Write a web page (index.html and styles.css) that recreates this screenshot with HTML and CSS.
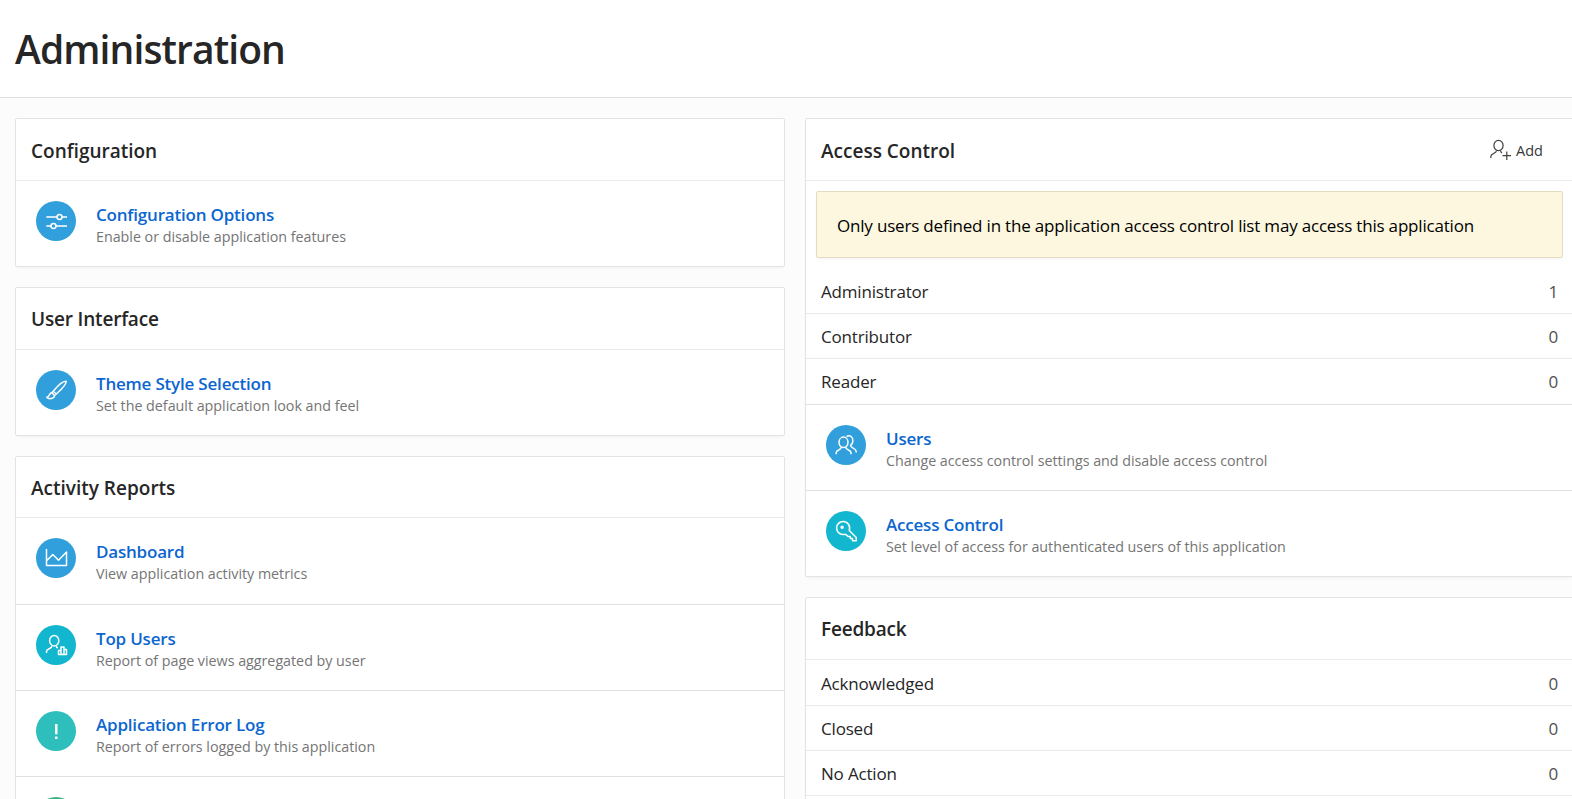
FILE: index.html
```html
<!DOCTYPE html>
<html lang="en">
<head>
<meta charset="utf-8">
<title>Administration</title>
<link rel="stylesheet" href="styles.css">
</head>
<body>
<header class="page-header"><h1 class="page-title">Administration</h1></header>
<main class="columns">
  <div class="column">
    <section class="card">
      <div class="card-head"><h2>Configuration</h2></div>
      <div class="item">
        <span class="badge blue"><svg class="icon" viewBox="0 0 24 24"><path d="M2.3 8h10.9M17.8 8H23M2.3 17h4.9M11.8 17H23"/><circle cx="15.5" cy="8" r="2.5"/><circle cx="9.5" cy="17" r="2.5"/></svg></span>
        <div class="item-text"><a class="item-title">Configuration Options</a><p class="item-desc">Enable or disable application features</p></div>
      </div>
    </section>
    <section class="card">
      <div class="card-head"><h2 class="raised">User Interface</h2></div>
      <div class="item">
        <span class="badge blue"><svg class="icon" viewBox="0 0 24 24"><path d="M22.2 3.2C22.6 5.500 18 11 12.300 16L9.200 13.200C13 8.500 19 3 22.200 3.200ZM9.200 13.200L7.800 14.800L10.600 17.500L12.300 16M7.800 14.800C5 14.800 5.800 18.500 2.800 19.200C4.500 21.600 10.200 21 10.600 17.500"/></svg></span>
        <div class="item-text"><a class="item-title">Theme Style Selection</a><p class="item-desc">Set the default application look and feel</p></div>
      </div>
    </section>
    <section class="card reports">
      <div class="card-head"><h2>Activity Reports</h2></div>
      <div class="item">
        <span class="badge blue"><svg class="icon" viewBox="0 0 24 24"><path d="M2.500 3V19.500H22.500V6L14.500 14.300L8.800 8.500L2.800 14.500"/></svg></span>
        <div class="item-text"><a class="item-title">Dashboard</a><p class="item-desc">View application activity metrics</p></div>
      </div>
      <div class="item">
        <span class="badge cyan"><svg class="icon" viewBox="0 0 24 24"><ellipse cx="10.200" cy="7.700" rx="4.600" ry="5.200"/><path d="M2.500 20V18.500C2.500 15.500 8 16 8 12.700M12.300 12.700C12.300 14.200 12.800 14.700 13.800 15.200M14.500 21.500V17.500H17V14H20V16.500H22.500V21.500ZM17 17.500V21.500M20 16.500V21.500"/></svg></span>
        <div class="item-text"><a class="item-title">Top Users</a><p class="item-desc">Report of page views aggregated by user</p></div>
      </div>
      <div class="item">
        <span class="badge teal"><svg class="icon" viewBox="0 0 24 24"><path class="bold" d="M12.300 5V15.300M12.300 17.600V19.900"/></svg></span>
        <div class="item-text"><a class="item-title">Application Error Log</a><p class="item-desc">Report of errors logged by this application</p></div>
      </div>
      <div class="item"><span class="badge green"></span></div>
    </section>
  </div>
  <div class="column side">
    <section class="card">
      <div class="card-head"><h2>Access Control</h2>
        <button class="add"><svg class="icon dark" viewBox="0 0 24 24"><ellipse cx="10.500" cy="7.500" rx="4.600" ry="5.200"/><path d="M2.800 20V18.500C2.800 15 8.500 16 8.500 12.500M12.500 12.500C12.500 14 13 14.400 14 14.900M18.800 13.500V22M14.500 17.700H23"/></svg><span class="add-label">Add</span></button>
      </div>
      <div class="alert">Only users defined in the application access control list may access this application</div>
      <dl class="rows">
        <div class="row"><dt>Administrator</dt><dd>1</dd></div>
        <div class="row"><dt>Contributor</dt><dd>0</dd></div>
        <div class="row last"><dt>Reader</dt><dd>0</dd></div>
      </dl>
      <div class="item">
        <span class="badge blue"><svg class="icon" viewBox="0 0 24 24"><ellipse cx="9.500" cy="9.300" rx="4.500" ry="5.200"/><path d="M2.200 21.200V19.800C2.200 16.500 7.300 17.500 7.300 14M11.700 14C11.700 17.500 17 16.500 17 19.800V21.200M12.500 3.500C16 1.500 19.200 4 18.900 8C18.800 10 17.800 11.500 16.500 12.300C16.500 15.300 22.200 15 22.200 18.500V19.500"/></svg></span>
        <div class="item-text"><a class="item-title">Users</a><p class="item-desc">Change access control settings and disable access control</p></div>
      </div>
      <div class="item">
        <span class="badge cyan"><svg class="icon" viewBox="0 0 24 24"><path d="M15.300 11.500L22.200 18.500V21.800H18.500V19.600H16.300V17.400H14L11.500 15.200C7 16.500 2.600 13.500 2.600 9C2.600 5.300 5.500 2.500 9.100 2.500C13.500 2.500 16.800 6.800 15.300 11.500Z"/><circle cx="8.100" cy="8.200" r="1"/></svg></span>
        <div class="item-text"><a class="item-title">Access Control</a><p class="item-desc">Set level of access for authenticated users of this application</p></div>
      </div>
    </section>
    <section class="card grow">
      <div class="card-head"><h2 class="raised">Feedback</h2></div>
      <dl class="rows feedback">
        <div class="row"><dt>Acknowledged</dt><dd>0</dd></div>
        <div class="row"><dt>Closed</dt><dd>0</dd></div>
        <div class="row"><dt>No Action</dt><dd>0</dd></div>
      </dl>
    </section>
  </div>
</main>
</body>
</html>
```
FILE: styles.css
```css
* { box-sizing: border-box; margin: 0; padding: 0; }
body {
  height: 799px;
  overflow: hidden;
  background: #fcfcfc;
  color: #262626;
  font-family: "Open Sans", "Noto Sans", sans-serif;
}
.page-header {
  height: 98px;
  padding: 22px 15px 0;
  background: #fff;
  border-bottom: 1px solid #e0e0e0;
}
.page-title { font-size: 39px; line-height: 54px; font-weight: 600; letter-spacing: -.9px; }
.columns {
  display: grid;
  grid-template-columns: 770px 770px;
  column-gap: 20px;
  height: 701px;
  padding: 20px 0 0 15px;
  overflow: hidden;
}
.column { display: flex; flex-direction: column; gap: 20px; }
.card {
  background: #fff;
  border: 1px solid #e3e3e3;
  border-radius: 2px;
  box-shadow: 0 2px 4px -2px rgba(0, 0, 0, .08);
}
.card.grow { flex: 1; border-bottom: 0; }
.card-head {
  display: flex;
  justify-content: space-between;
  align-items: center;
  height: 62px;
  padding: 0 31px 0 15px;
  border-bottom: 1px solid #ebebeb;
}
.reports .card-head { height: 61px; }
h2 { padding-top: 2px; font-size: 19px; font-weight: 600; line-height: 26px; }
h2.raised { padding-top: 0; letter-spacing: -.18px; }
.item {
  display: flex;
  gap: 20px;
  height: 86px;
  padding: 20px;
  border-bottom: 1px solid #e0e0e0;
}
.item:last-child { height: 85px; border-bottom: 0; }
.reports .item:nth-child(2) { height: 87px; }
.badge {
  display: flex;
  align-items: center;
  justify-content: center;
  flex: none;
  width: 40px;
  height: 40px;
  border-radius: 50%;
}
.blue { background: #309fdb; }
.cyan { background: #13b6cf; }
.teal { background: #2ebfbc; }
.green { background: #3caf85; }
.icon {
  flex: none;
  width: 24px;
  height: 24px;
  fill: none;
  stroke: #fff;
  stroke-width: 1.5;
  stroke-linejoin: round;
}
.icon .bold { stroke-width: 2.4; }
.icon.dark { stroke: #404040; stroke-width: 1.2; }
.item-text { padding-top: 2px; }
.item-title { display: block; font-size: 17px; font-weight: 600; line-height: 24px; letter-spacing: -.2px; color: #0c66cf; white-space: nowrap; }
.item-desc { font-size: 14.3px; line-height: 20px; letter-spacing: -.02px; color: #757575; white-space: nowrap; }
.add {
  display: flex;
  align-items: center;
  gap: 4px;
  border: 0;
  background: none;
  color: #383838;
  font: 14.5px/20px "Open Sans", "Noto Sans", sans-serif;
}
.add-label { padding-top: 2px; }
.alert {
  height: 67px;
  margin: 10px 11px 0 10px;
  padding: 0 20px;
  border: 1px solid #e4dcc0;
  border-radius: 2px;
  background: #fdf7df;
  box-shadow: 0 2px 4px -2px rgba(0, 0, 0, .08);
  color: #000;
  font-size: 17px;
  line-height: 67px;
  letter-spacing: -.19px;
  white-space: nowrap;
}
.rows { padding-top: 11px; font-size: 17px; letter-spacing: -.18px; }
.rows.feedback { padding-top: 1px; }
.row {
  display: flex;
  justify-content: space-between;
  height: 45px;
  padding: 0 16px 0 15px;
  line-height: 46px;
  border-bottom: 1px solid #ebebeb;
}
.row.last { height: 46px; border-bottom-color: #e0e0e0; }
.row dd { color: #505050; }
```
